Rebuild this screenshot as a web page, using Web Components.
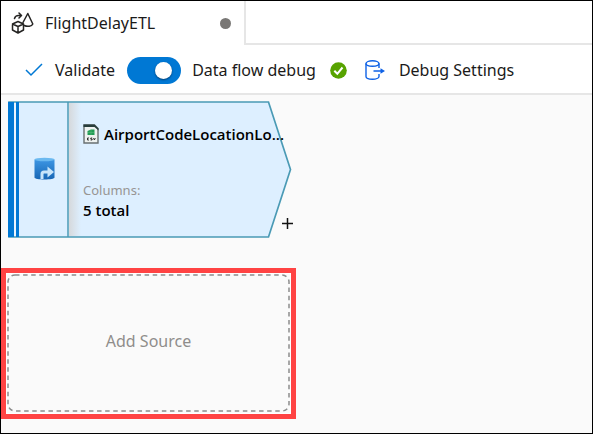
<!DOCTYPE html>
<html lang="en">
<head>
<meta charset="utf-8">
<title>FlightDelayETL</title>
<style>
  html, body { height: 100%; }
  body { margin: 0; font-family: "Noto Sans", "Open Sans", sans-serif; font-size: 16px; line-height: 24px; color: #1b1a19; }
</style>
</head>
<body>
<flow-frame>
  <flow-tabs slot="tabs">FlightDelayETL</flow-tabs>
  <flow-toolbar slot="toolbar"></flow-toolbar>
  <source-node columns="5 total">AirportCodeLocationLo...</source-node>
  <add-source>Add Source</add-source>
</flow-frame>
<script>
const define = (name, html, setup) => customElements.define(name, class extends HTMLElement {
  constructor() {
    super();
    const template = document.createElement('template');
    template.innerHTML = html;
    this.attachShadow({ mode: 'open' }).append(template.content.cloneNode(true));
  }
  connectedCallback() { if (setup) setup(this, this.shadowRoot); }
});

const buttonReset = `
  * { box-sizing: border-box; }
  button { font: inherit; color: inherit; background: none; border: 0; padding: 0; margin: 0; cursor: pointer; }
  svg { display: block; flex: none; }`;

define('flow-frame', `
<style>
  :host { display: flex; flex-direction: column; box-sizing: border-box; min-height: 100%; border: 1px solid #000; background: #fff; }
  main { flex: 1; display: flex; flex-direction: column; align-items: flex-start; gap: 30px; padding: 6px 0 14px; background: #fafafa; border-top: 2px solid #e6e6e6; }
</style>
<slot name="tabs"></slot>
<slot name="toolbar"></slot>
<main><slot></slot></main>`);

define('flow-tabs', `
<style>${buttonReset}
  :host { display: flex; height: 44px; }
  button { display: flex; align-items: center; width: 243px; padding: 0 13px 0 10px; }
  .name { margin-left: 11px; flex: 1; text-align: left; }
  .dot { width: 11px; height: 11px; border-radius: 50%; background: #797775; }
  .rest { flex: 1; border-left: 2px solid #e6e6e6; border-bottom: 2px solid #e6e6e6; }
</style>
<button type="button">
  <svg width="23" height="22" viewBox="0 0 23 22" fill="none" stroke="#252423" stroke-width="1.5" stroke-linejoin="round" stroke-linecap="round">
    <path d="M1.500 12 7 9.500l5.500 2.500v6L7 21l-5.500-3zM1.500 12 7 14.500l5.500-2.500M7 14.500v6.500"/>
    <path d="M12 10.500 16.800 1.500l5 10.500c-1 2.500-5.500 3-8.500 1.500"/>
    <path d="M3.500 6.500c.5-2 2-3 4-3h2.500M8 1 10.500 3.500 8 6"/>
  </svg>
  <span class="name"><slot></slot></span>
  <span class="dot"></span>
</button>
<div class="rest"></div>`);

define('flow-toolbar', `
<style>${buttonReset}
  :host { display: flex; align-items: center; height: 48px; padding: 2px 24px 0; box-sizing: border-box; white-space: nowrap; }
  button, label { display: flex; align-items: center; }
  .validate { gap: 12px; }
  .settings { gap: 14px; }
  label { gap: 11px; margin-left: 12px; }
  input { appearance: none; flex: none; display: flex; align-items: center; justify-content: flex-end; width: 54px; height: 27px; margin: 0; padding: 0 9px; border-radius: 14px; background: #0078d4; }
  input::before { content: ""; width: 17px; height: 17px; border-radius: 50%; background: #fff; box-shadow: 0 1px 2px #003e73; }
  input:not(:checked) { justify-content: flex-start; background: #8a8886; }
  .ok { margin: 0 18px 0 14px; }
</style>
<button class="validate" type="button">
  <svg width="18" height="14" viewBox="0 0 18 14" fill="none" stroke="#0078d4" stroke-width="1.500"><path d="M1 7 6 12 17 1"/></svg>
  Validate
</button>
<label><input type="checkbox" role="switch" checked>Data flow debug</label>
<svg class="ok" width="17" height="17" viewBox="0 0 17 17"><circle cx="8.500" cy="8.500" r="8.300" fill="#57a300"/><path d="M4.300 8.800 7.300 11.800 12.500 5.500" fill="none" stroke="#fff" stroke-width="2"/></svg>
<button class="settings" type="button">
  <svg width="20" height="20" viewBox="0 0 20 20" fill="none" stroke="#0f62e6" stroke-width="1.400">
    <ellipse cx="7.500" cy="3.500" rx="6.500" ry="2.700"/>
    <path d="M1 3.500v13c0 1.500 3 2.700 6.500 2.700s6.500-1.200 6.500-2.700v-2.500M14 3.500v4.500M8.500 11H17"/>
    <path d="M15.500 8.200 20 11l-4.500 2.800z" fill="#0f62e6" stroke="none"/>
  </svg>
  Debug Settings
</button>`);

define('source-node', `
<style>${buttonReset}
  :host { display: grid; width: 288px; height: 137px; margin-left: 7px; color: #000; }
  .shape, .content, .plus { grid-area: 1 / 1; }
  .content { display: grid; grid-template-columns: 60px 1fr; }
  .kind { display: flex; align-items: center; justify-content: center; padding: 0 0 2px 12px; }
  .info { display: flex; flex-direction: column; padding: 21px 0 0 15px; }
  .title { display: flex; align-items: center; gap: 5px; white-space: nowrap; }
  .title, .value { font-family: "Open Sans", "Noto Sans", sans-serif; font-size: 15px; font-weight: 600; }
  .caption { margin-top: 34px; font-size: 13px; line-height: 20px; color: #979593; }
  .value { line-height: 20px; }
  .plus { align-self: end; justify-self: end; padding: 2px; margin-bottom: 6px; }
</style>
<svg class="shape" width="288" height="137" viewBox="0 0 288 137">
  <defs><linearGradient id="edge"><stop offset="0" stop-color="#d6d9dc"/><stop offset="1" stop-color="#ddefff"/></linearGradient></defs>
  <path d="M1 1H260.500L282.500 68.500 260.500 136H1z" fill="#ddefff"/>
  <path d="M61 2h12v133H61z" fill="url(#edge)"/>
  <path d="M1 1H260.500L282.500 68.500 260.500 136H1z" fill="none" stroke="#4a9ab5" stroke-width="1.700"/>
  <path d="M60 1v135" stroke="#4a9ab5" stroke-width="1.500"/>
  <path d="M0 1h6v135H0z" fill="#0078d4"/>
  <path d="M6 2h2v133H6z" fill="#e9f5ff"/>
  <path d="M8 1h3v135H8z" fill="#0078d4"/>
</svg>
<div class="content">
  <div class="kind">
    <svg width="21" height="23" viewBox="0 0 21 23">
      <defs><linearGradient id="db" x2="0" y2="1"><stop offset="0" stop-color="#3d96e3"/><stop offset="1" stop-color="#1766b5"/></linearGradient></defs>
      <path d="M.5 2.500v18c0 1.200 4.500 2 10 2s10-.8 10-2v-18z" fill="url(#db)"/>
      <ellipse cx="10.500" cy="2.500" rx="10" ry="1.700" fill="#6bb9f0"/>
      <path d="M8 22V17q0-2 2-2h4" fill="none" stroke="#c8e5fa" stroke-width="3"/>
      <path d="M13.500 9.500 20 15l-6.500 5.500z" fill="#c8e5fa"/>
    </svg>
  </div>
  <div class="info">
    <div class="title">
      <svg width="16" height="20" viewBox="0 0 16 20">
        <path d="M1 1h10.500L15 4.500V19H1z" fill="#eef2f0" stroke="#687071" stroke-width="1.400"/>
        <path d="M.5.5H11.500l4 4v2l-4-3.500H.5z" fill="#273d3b"/>
        <path d="M4.500 7 8 5.500h3.500V11h-7z" fill="#229c55"/><path d="M5 8.500h6M8 6v5" stroke="#61be83" stroke-width=".5"/>
        <path d="M6 14H4.500v2H6M9.200 14H7.800v1h1.300v1H7.600M10.500 14l.9 2 .9-2" fill="none" stroke="#222" stroke-width=".9"/>
      </svg>
      <slot></slot>
    </div>
    <div class="caption">Columns:</div>
    <div class="value"></div>
  </div>
</div>
<button class="plus" type="button" aria-label="Add step">
  <svg width="13" height="13" viewBox="0 0 13 13" stroke="#111" stroke-width="1.500"><path d="M6.500 1v11M1 6.500h11"/></svg>
</button>`, (el, root) => { root.querySelector('.value').textContent = el.getAttribute('columns'); });

define('add-source', `
<style>${buttonReset}
  :host { display: block; box-sizing: border-box; width: 295px; border: 5px solid #ff4343; background: #fff; padding: 1px; }
  button { display: grid; place-items: center; width: 100%; height: 139px; background: #fafafa; color: #8f8d8b; }
  svg, span { grid-area: 1 / 1; }
  svg { width: 100%; height: 100%; }
  span { padding-bottom: 6px; }
</style>
<button type="button">
  <svg viewBox="0 0 283 139"><rect x="1" y="1" width="281" height="136" rx="7" fill="none" stroke="#8c8c8c" stroke-width="1.500" stroke-dasharray="4.500 3.600"/></svg>
  <span><slot></slot></span>
</button>`);
</script>
</body>
</html>
